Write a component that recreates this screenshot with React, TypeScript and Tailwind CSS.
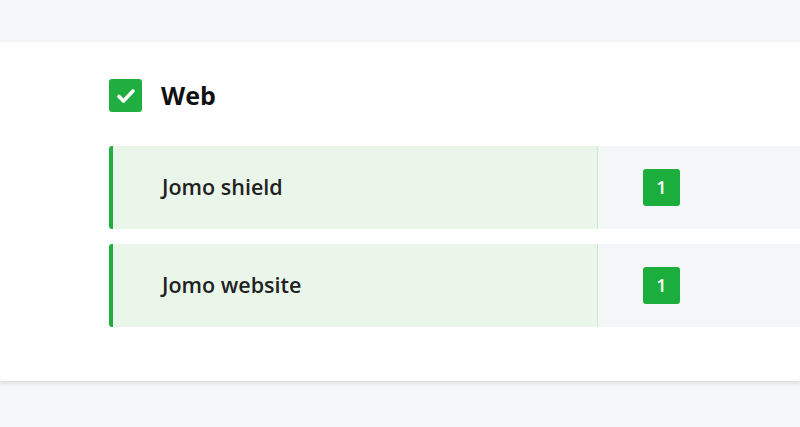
import React from 'react';

const ITEMS = ['Jomo shield', 'Jomo website'];

const Row: React.FC<{ label: string; count: number }> = ({ label, count }) => (
  <div className="flex h-[83px]">
    <div className="w-[4px] rounded-l-[3px] bg-[#1fae3f]" />
    <div className="flex w-[485px] items-center border-r border-[#c9ebcc] bg-[#eaf6ea] pl-[49px]">
      <span className="text-[21.5px] font-semibold text-[#222]">{label}</span>
    </div>
    <div className="flex flex-1 items-center bg-[#f5f6f8] pl-[45px]">
      <span className="flex h-[37px] w-[37px] items-center justify-center rounded-[3px] bg-[#1cae3c] text-[18px] font-semibold text-white">
        {count}
      </span>
    </div>
  </div>
);

export default function App() {
  return (
    <div className="flex h-[427px] w-[800px] flex-col overflow-hidden bg-[#f5f6f8] font-['Open_Sans',sans-serif]">
      {/* top band */}
      <div className="h-[42px] shrink-0 bg-[#f4f6f8]" />

      {/* card */}
      <div className="h-[339px] shrink-0 bg-white pl-[109px] pt-[37px] shadow-[0_2px_4px_rgba(0,0,0,0.12)]">
        <div className="flex h-[33px] items-center gap-[19px]">
          <span className="flex h-[33px] w-[33px] items-center justify-center rounded-[3px] bg-[#1fae3f]">
            <svg width="22" height="22" viewBox="0 0 22 22" fill="none">
              <path d="M4 11.5l4.5 4.5 9.5-10" stroke="white" strokeWidth="3.6" strokeLinecap="round" strokeLinejoin="round" />
            </svg>
          </span>
          <span className="text-[25px] leading-none font-bold text-[#111]">Web</span>
        </div>

        <div className="mt-[34px] flex flex-col gap-[15px]">
          {ITEMS.map((item) => (
            <Row key={item} label={item} count={1} />
          ))}
        </div>
      </div>

      <div className="flex-1" />
    </div>
  );
}
